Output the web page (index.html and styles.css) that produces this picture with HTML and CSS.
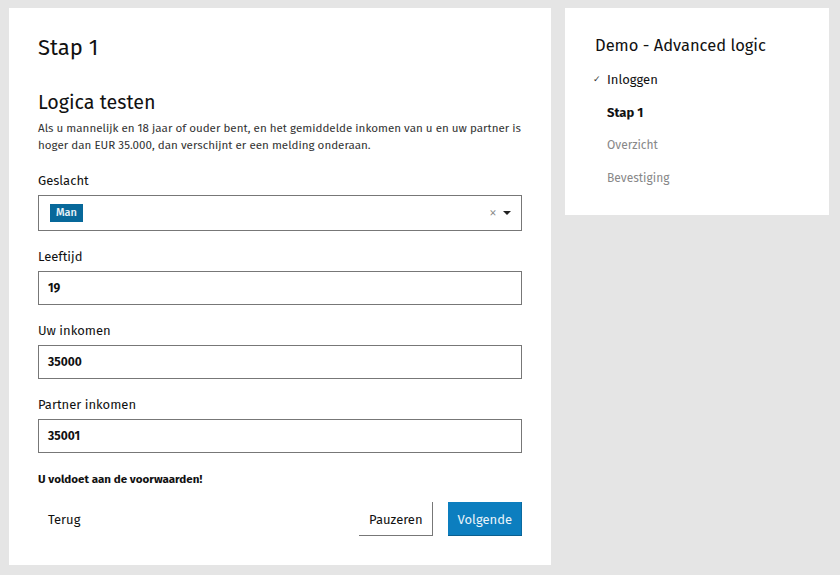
FILE: index.html
```html
<!DOCTYPE html>
<html lang="nl">
<head>
<meta charset="utf-8">
<title>Stap 1</title>
<link rel="stylesheet" href="styles.css">
</head>
<body>
<div class="page">
  <main class="card main">
    <h1 class="step-title">Stap 1</h1>
    <h2 class="section-title">Logica testen</h2>
    <p class="intro">Als u mannelijk en 18 jaar of ouder bent, en het gemiddelde inkomen van u en uw partner is hoger dan EUR 35.000, dan verschijnt er een melding onderaan.</p>

    <div class="field">
      <label class="label">Geslacht</label>
      <div class="select">
        <span class="tag">Man</span>
        <span class="select-icons">
          <span class="clear">×</span>
          <svg class="caret" width="8" height="5" viewBox="0 0 8 5"><path d="M0 0h8L4 4z" fill="#222"/></svg>
        </span>
      </div>
    </div>

    <div class="field">
      <label class="label">Leeftijd</label>
      <div class="input">19</div>
    </div>

    <div class="field">
      <label class="label">Uw inkomen</label>
      <div class="input">35000</div>
    </div>

    <div class="field">
      <label class="label">Partner inkomen</label>
      <div class="input">35001</div>
    </div>

    <p class="notice">U voldoet aan de voorwaarden!</p>

    <div class="actions">
      <button class="btn btn-link">Terug</button>
      <div class="actions-right">
        <button class="btn btn-secondary">Pauzeren</button>
        <button class="btn btn-primary">Volgende</button>
      </div>
    </div>
  </main>

  <aside class="card side">
    <h2 class="side-title">Demo - Advanced logic</h2>
    <ul class="steps">
      <li class="step done"><span class="check">✓</span>Inloggen</li>
      <li class="step current">Stap 1</li>
      <li class="step todo">Overzicht</li>
      <li class="step todo">Bevestiging</li>
    </ul>
  </aside>
</div>
</body>
</html>
```

FILE: styles.css
```css
* { box-sizing: border-box; }
html, body { margin: 0; padding: 0; }
body {
  background: #e5e5e5;
  font-family: "Fira Sans", "Open Sans", "Noto Sans", sans-serif;
  color: #111;
}
.page {
  display: flex;
  align-items: flex-start;
  gap: 14px;
  padding: 8px 0 0 9px;
}
.card { background: #fff; }
.main {
  width: 542px;
  height: 557px;
  padding: 26px 29px 0 29px;
}
.step-title {
  margin: 0;
  font-size: 22px;
  font-weight: 400;
  line-height: 28px;
}
.section-title {
  margin: 28px 0 0;
  font-size: 19.7px;
  font-weight: 400;
  line-height: 26px;
}
.intro {
  margin: 4px 0 0;
  font-size: 11.6px;
  line-height: 17px;
  color: #333;
}
.field { margin-top: 18px; }
.field + .field { margin-top: 17px; }
.label {
  display: block;
  font-size: 13px;
  line-height: 18px;
  margin-bottom: 5px;
}
.select, .input {
  border: 1px solid #777;
  height: 34px;
  display: flex;
  align-items: center;
  padding: 0 9px;
  font-size: 12px;
  font-weight: 700;
}
.select { height: 36px; justify-content: space-between; padding-right: 10px; }
.tag {
  background: #07689a;
  color: #e8f2f8;
  font-weight: 500;
  font-size: 11px;
  line-height: 18px;
  padding: 0 6px;
  margin-left: 2px;
}
.select-icons { display: flex; align-items: center; gap: 6px; }
.clear { color: #888; font-weight: 300; font-size: 16px; line-height: 1; }
.notice {
  margin: 19px 0 0;
  font-size: 11.6px;
  font-weight: 700;
  line-height: 14px;
}
.actions {
  margin-top: 16px;
  display: flex;
  justify-content: space-between;
  align-items: center;
}
.actions-right { display: flex; gap: 15px; }
.btn {
  font-family: inherit;
  font-size: 13px;
  height: 34px;
  padding: 0 10px;
  border: 0;
  background: none;
  cursor: pointer;
}
.btn-link { color: #111; }
.btn-secondary {
  color: #111;
  background: #fff;
  box-shadow: inset -1px -1px 0 #777;
  padding: 0 10px 0 10px;
}
.btn-primary {
  background: #0c7ebf;
  color: #eaf4fa;
  box-shadow: inset 0 -1px 0 #0a5f8f, inset -1px 0 0 #0a6aa0;
  padding: 0 10px;
}
.side {
  width: 264px;
  height: 207px;
  padding: 27px 20px 0 30px;
}
.side-title {
  margin: 0;
  font-size: 16.5px;
  font-weight: 400;
  line-height: 22px;
}
.steps {
  list-style: none;
  margin: 14px 0 0;
  padding: 0 0 0 12px;
}
.step {
  position: relative;
  font-size: 13px;
  line-height: 17px;
  margin-bottom: 16px;
}
.step.current { font-weight: 700; }
.step.todo { color: #888; font-size: 12px; }
.check {
  position: absolute;
  left: -14px;
  top: 0;
  font-size: 9px;
  color: #333;
}
```
